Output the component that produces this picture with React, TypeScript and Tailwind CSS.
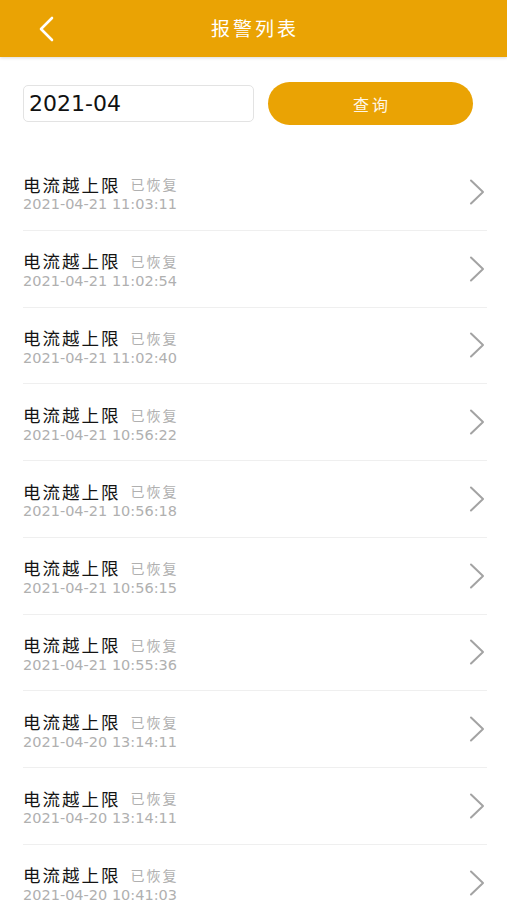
import React from "react";

const rows = [
  "2021-04-21 11:03:11",
  "2021-04-21 11:02:54",
  "2021-04-21 11:02:40",
  "2021-04-21 10:56:22",
  "2021-04-21 10:56:18",
  "2021-04-21 10:56:15",
  "2021-04-21 10:55:36",
  "2021-04-20 13:14:11",
  "2021-04-20 13:14:11",
  "2021-04-20 10:41:03",
];

export default function App() {
  return (
    <div
      className="w-[507px] h-[900px] overflow-hidden bg-white"
      style={{ fontFamily: '"DejaVu Sans", "Noto Sans CJK SC", sans-serif' }}
    >
      <header className="relative h-[57px] bg-[#EAA304] flex items-center justify-center shadow-[0_1px_3px_rgba(0,0,0,0.15)]">
        <svg
          className="absolute left-[37px] top-[16px]"
          width="20"
          height="26"
          viewBox="0 0 20 26"
          fill="none"
        >
          <path d="M15 2 L4 13 L15 24" stroke="white" strokeWidth="2.6" strokeLinecap="round" strokeLinejoin="round" />
        </svg>
        <span className="text-white text-[19px] tracking-[3px] ml-[3px]" style={{ fontFamily: '"Noto Sans CJK SC", sans-serif' }}>
          报警列表
        </span>
      </header>

      <div className="flex items-center px-[23px] pt-[25px] gap-[14px]">
        <div className="w-[231px] h-[37px] border border-[#e3e3e3] rounded-[5px] flex items-center pl-[5px]">
          <span className="text-[22px] leading-none text-[#111]" style={{ fontFamily: '"DejaVu Sans", sans-serif' }}>2021-04</span>
        </div>
        <button className="w-[205px] h-[43px] rounded-full bg-[#EAA304] text-[#FFF7E6] text-[16px] tracking-[3px] pl-[3px]" style={{ fontFamily: '"Noto Sans CJK SC", sans-serif' }}>
          查询
        </button>
      </div>

      <div className="mt-[29px] px-[23px] -mr-[3px]">
        {rows.map((d, i) => (
          <div
            key={i}
            className="h-[76.75px] border-b border-[#efefef] flex items-center justify-between"
          >
            <div className="flex flex-col mt-[3px]">
              <div className="flex items-center h-[22px]">
                <span className="text-[17.5px] tracking-[2px] text-[#141414] leading-none" style={{ fontFamily: '"Noto Sans CJK SC", sans-serif' }}>
                  电流越上限
                </span>
                <span className="ml-[10px] text-[14px] tracking-[2px] text-[#b0b0b0] leading-none" style={{ fontFamily: '"Noto Sans CJK SC", sans-serif' }}>
                  已恢复
                </span>
              </div>
              <span className="text-[14.5px] text-[#b0b0b0] leading-[18px]" style={{ fontFamily: '"DejaVu Sans", sans-serif' }}>
                {d}
              </span>
            </div>
            <svg width="20" height="28" viewBox="0 0 20 28" fill="none">
              <path d="M4 2.5 L16 14 L4 25.5" stroke="#a3a3a3" strokeWidth="2" strokeLinecap="round" strokeLinejoin="round" />
            </svg>
          </div>
        ))}
      </div>
    </div>
  );
}
